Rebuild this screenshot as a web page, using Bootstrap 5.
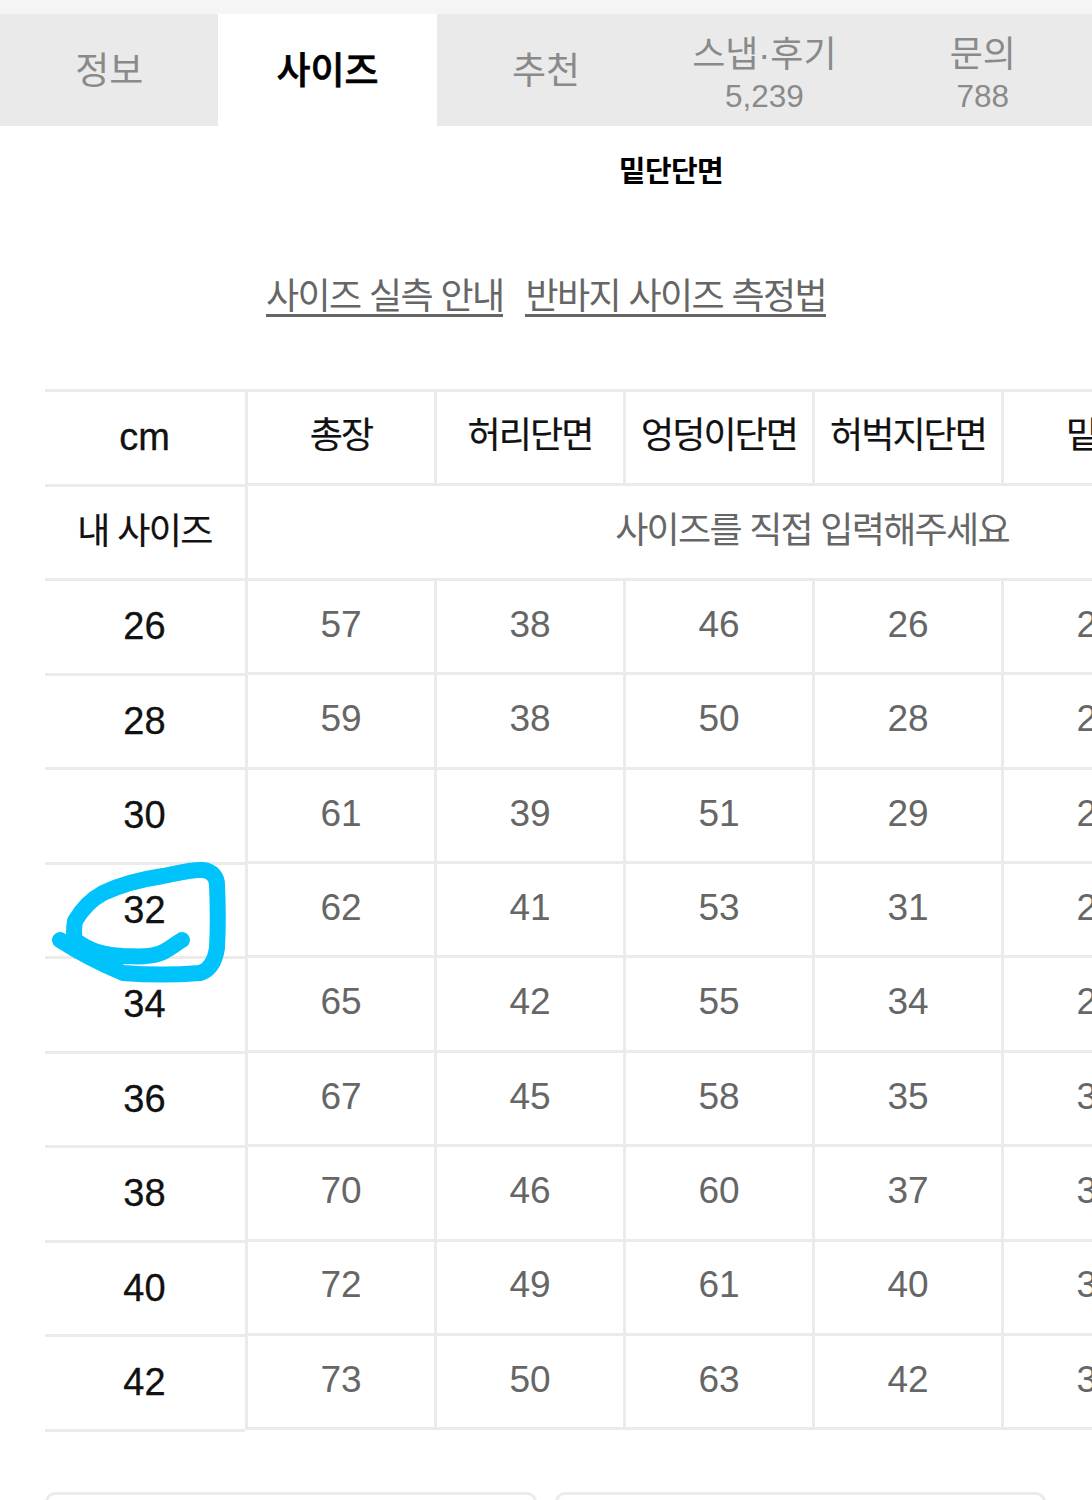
<!DOCTYPE html>
<html lang="ko">
<head>
<meta charset="utf-8">
<title>사이즈</title>
<link href="https://cdn.jsdelivr.net/npm/bootstrap@5.3.0/dist/css/bootstrap.min.css" rel="stylesheet">
<style>
html,body{height:1500px;overflow:hidden;background:#fff}
body{font-family:"Liberation Sans","Noto Sans CJK KR",sans-serif;color:#111}
.topstrip{height:14px;background:#f5f5f5}
.tabbar{height:112px;background:#eaeaea;display:flex}
.tabitem{flex:0 0 218.4px;color:#8a8a8a;font-size:37px;line-height:42px;text-decoration:none;display:flex;flex-direction:column;align-items:center;justify-content:center;padding-top:3px}
.tabitem.two{padding-top:10px;font-size:36px}
.tabitem.on{background:#fff;color:#000;font-weight:500;-webkit-text-stroke:.6px #000}
.tabitem small{font-size:31.5px;line-height:40px;letter-spacing:0;color:#8a8a8a;margin-top:0}
.subhead{font-size:29px;font-weight:700;color:#000;line-height:40px;text-align:center;padding-left:250px;padding-top:26px;letter-spacing:-.6px}
.guide{margin-top:84px;gap:22px;height:113px;align-items:flex-start}
.guide a{font-size:36px;line-height:41px;color:#666;text-decoration:none;border-bottom:3px solid #666;letter-spacing:-1.6px;height:41px;white-space:nowrap}
.sheet{position:relative;padding-left:45px;height:1045px}
.leftcol{width:200px;flex:none}
.leftcol table,.rightcol table{border-collapse:collapse;table-layout:fixed;margin:0}
.leftcol td{width:200px;height:94.5px;border-top:3px solid #ebebeb;border-bottom:3px solid #ebebeb;text-align:center;vertical-align:middle;font-size:38px;color:#111;padding:0 1px 0 0;-webkit-text-stroke:.3px #111}
.leftcol .kr{font-size:36px;letter-spacing:-1.6px;-webkit-text-stroke:.2px #111}
.rightcol{flex:1 1 auto;overflow:hidden;min-width:0}
.rightcol table{width:945px}
.rightcol td{width:189px;height:94.4px;border:3px solid #ebebeb;text-align:center;vertical-align:middle;font-size:37px;color:#666;padding:0 0 4px}
.rightcol tr:first-child td{font-size:36px;color:#111;letter-spacing:-1.9px;-webkit-text-stroke:.2px #111;padding:0 0 3px}
.rightcol .note{font-size:36px;letter-spacing:-1.7px;padding:0 0 3px 186px;text-align:center}
.scribble{position:absolute;left:0;top:0;width:240px;height:130px;pointer-events:none;margin-top:472px}
.boxes{padding:0 46px 0 45px;gap:18px;margin-top:58px}
.boxitem{flex:1 1 0;height:60px;border:3px solid #ebebeb;border-radius:10px;background:#fff}
</style>
</head>
<body>
<div class="topstrip"></div>
<nav class="tabbar">
  <a class="tabitem" href="#">정보</a>
  <a class="tabitem on" href="#">사이즈</a>
  <a class="tabitem" href="#">추천</a>
  <a class="tabitem two" href="#">스냅·후기<small>5,239</small></a>
  <a class="tabitem two" href="#">문의<small>788</small></a>
</nav>
<div class="subhead">밑단단면</div>
<div class="guide d-flex justify-content-center">
  <a href="#">사이즈 실측 안내</a>
  <a href="#">반바지 사이즈 측정법</a>
</div>
<div class="sheet d-flex">
  <div class="leftcol">
    <table>
      <tr><td>cm</td></tr>
      <tr><td class="kr">내 사이즈</td></tr>
      <tr><td>26</td></tr>
      <tr><td>28</td></tr>
      <tr><td>30</td></tr>
      <tr><td>32</td></tr>
      <tr><td>34</td></tr>
      <tr><td>36</td></tr>
      <tr><td>38</td></tr>
      <tr><td>40</td></tr>
      <tr><td>42</td></tr>
    </table>
  </div>
  <div class="rightcol">
    <table>
      <tr><td>총장</td><td>허리단면</td><td>엉덩이단면</td><td>허벅지단면</td><td>밑위</td></tr>
      <tr><td class="note" colspan="5">사이즈를 직접 입력해주세요</td></tr>
      <tr><td>57</td><td>38</td><td>46</td><td>26</td><td>23</td></tr>
      <tr><td>59</td><td>38</td><td>50</td><td>28</td><td>24</td></tr>
      <tr><td>61</td><td>39</td><td>51</td><td>29</td><td>25</td></tr>
      <tr><td>62</td><td>41</td><td>53</td><td>31</td><td>26</td></tr>
      <tr><td>65</td><td>42</td><td>55</td><td>34</td><td>28</td></tr>
      <tr><td>67</td><td>45</td><td>58</td><td>35</td><td>30</td></tr>
      <tr><td>70</td><td>46</td><td>60</td><td>37</td><td>31</td></tr>
      <tr><td>72</td><td>49</td><td>61</td><td>40</td><td>32</td></tr>
      <tr><td>73</td><td>50</td><td>63</td><td>42</td><td>33</td></tr>
    </table>
  </div>
  <svg class="scribble" viewBox="0 0 240 130" fill="none" aria-hidden="true">
    <path d="M182 79 C172 85 166 91 158 93 C146 97 134 95 123 95 C106 94 90 91 75 79 C73 72 74 66 75 60 C82 48 92 38 103 32 C122 23 143 18 163 15 C178 12 192 8 203 9 C212 10 217 16 217 24 C218 46 218 68 217 87 C215 100 210 109 200 112 C175 114 148 114 123 112 C102 103 80 92 60 79" stroke="#00c3fb" stroke-width="16" stroke-linecap="round" stroke-linejoin="round"/>
  </svg>
</div>
<div class="boxes d-flex">
  <div class="boxitem"></div>
  <div class="boxitem"></div>
</div>
</body>
</html>
